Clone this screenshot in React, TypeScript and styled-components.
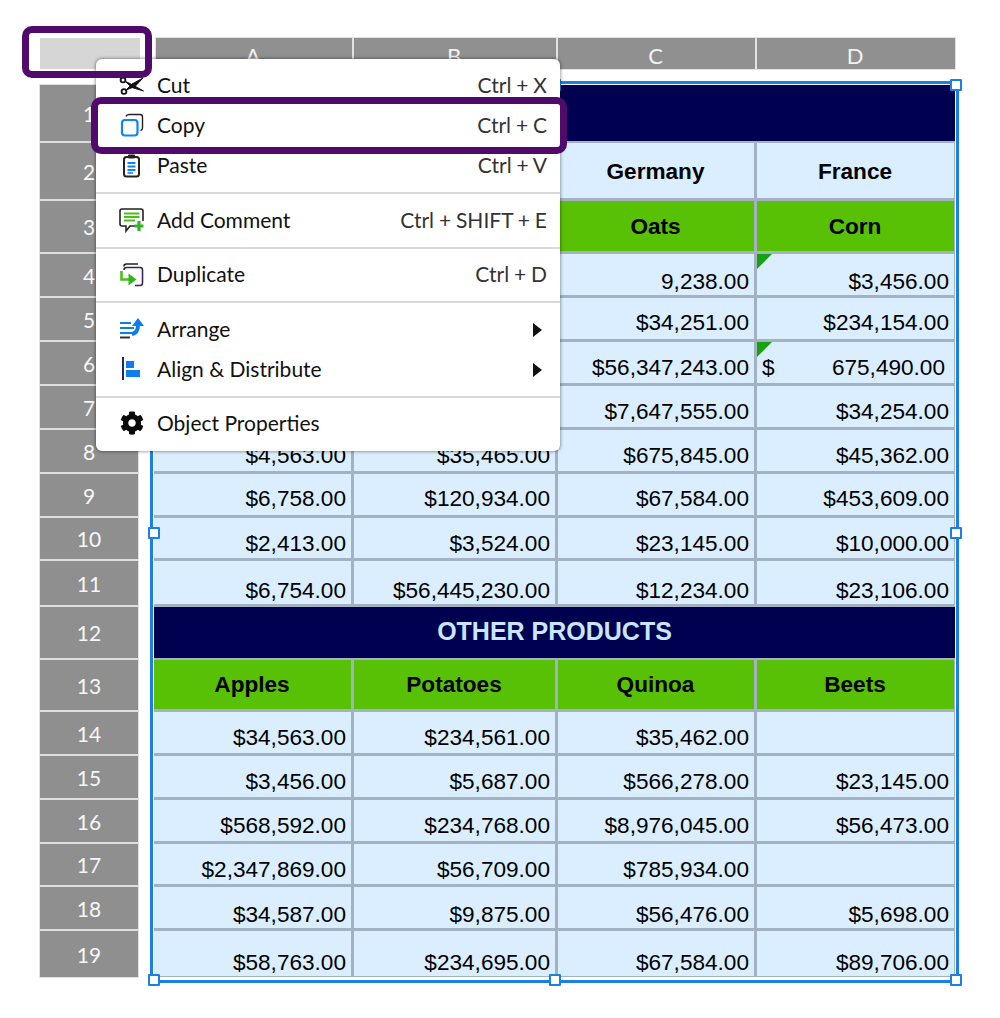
import * as React from "react";
import { FaCog } from "react-icons/fa";
import styled, { createGlobalStyle } from "styled-components";

const GlobalStyle = createGlobalStyle`
    html, body {
        margin: 0;
        padding: 0;
        background: #fff;
    }
`;

const ROW_HEIGHTS = [56, 56, 51, 42, 42, 42, 42, 42, 42, 41, 44, 51, 50, 42, 42, 42, 41, 42, 46];
const rowTemplate = ROW_HEIGHTS.map((h) => `${h}px`).join(" ");

type Row = { cells: string[]; kind?: "value" | "label" | "green"; pad?: number; note?: boolean };

const TOP_ROWS: Row[] = [
    { cells: ["", "", "Germany", "France"], kind: "label" },
    { cells: ["", "", "Oats", "Corn"], kind: "green" },
    { cells: ["", "", "9,238.00", "$3,456.00"], pad: 1, note: true },
    { cells: ["", "", "$34,251.00", "$234,154.00"], pad: 4 },
    { cells: ["", "", "$56,347,243.00", "675,490.00"] },
    { cells: ["", "", "$7,647,555.00", "$34,254.00"] },
    { cells: ["$4,563.00", "$35,465.00", "$675,845.00", "$45,362.00"] },
    { cells: ["$6,758.00", "$120,934.00", "$67,584.00", "$453,609.00"], pad: 4 },
    { cells: ["$2,413.00", "$3,524.00", "$23,145.00", "$10,000.00"], pad: 2 },
    { cells: ["$6,754.00", "$56,445,230.00", "$12,234.00", "$23,106.00"], pad: 1 },
];

const BOTTOM_ROWS: Row[] = [
    { cells: ["Apples", "Potatoes", "Quinoa", "Beets"], kind: "green" },
    { cells: ["$34,563.00", "$234,561.00", "$35,462.00", ""] },
    { cells: ["$3,456.00", "$5,687.00", "$566,278.00", "$23,145.00"] },
    { cells: ["$568,592.00", "$234,768.00", "$8,976,045.00", "$56,473.00"] },
    { cells: ["$2,347,869.00", "$56,709.00", "$785,934.00", ""], pad: 2 },
    { cells: ["$34,587.00", "$9,875.00", "$56,476.00", "$5,698.00"], pad: 1 },
    { cells: ["$58,763.00", "$234,695.00", "$67,584.00", "$89,706.00"], pad: 1 },
];

const Page = styled.div`
    position: relative;
    width: 1000px;
    height: 1018px;
    padding: 38px 0 0 40px;
    box-sizing: border-box;
    overflow: hidden;
    background: #fff;
    font-family: "Liberation Sans", Arial, sans-serif;
`;

const HeaderRow = styled.div`
    display: grid;
    grid-template-columns: 114px 196px 202px 197px 198px;
    column-gap: 2px;
    width: 915px;
    height: 30px;
    margin-bottom: 17px;
`;

const Corner = styled.div`
    width: 100px;
    background: #d6d6d6;
`;

const ColumnHead = styled.div`
    display: flex;
    justify-content: center;
    align-items: center;
    padding: 4px 2px 0 0;
    background: #909090;
    outline: 1px solid #e2e2e2;
    color: #f2f2f2;
    font-family: Lato, sans-serif;
    font-size: 22px;
`;

const Body = styled.div`
    display: flex;
    align-items: flex-start;
`;

const RowHeads = styled.div`
    display: grid;
    grid-template-rows: ${rowTemplate};
    row-gap: 2px;
    width: 98px;
    margin-right: 16px;
    background: #dedede;
    outline: 1px solid #e2e2e2;
`;

const RowHead = styled.div`
    display: flex;
    justify-content: center;
    align-items: center;
    background: #8f8f8f;
    color: #f6f6f6;
    font-family: Lato, sans-serif;
    font-size: 21px;
`;

const Selection = styled.div`
    position: relative;
`;

const DataGrid = styled.div`
    display: grid;
    grid-template-columns: 198px 202px 197px 198px;
    grid-template-rows: ${rowTemplate};
    gap: 2px;
    width: 801px;
    background: #a3b2c2;
`;

const Cell = styled.div<{ $kind?: string; $pad?: number }>`
    position: relative;
    display: flex;
    box-sizing: border-box;
    font-size: 22.6px;
    line-height: 26px;
    color: #000;
    background: ${(p) => (p.$kind === "green" ? "#58c005" : "#daeeff")};
    box-shadow: inset 0 -1px 0 #a3b2c2, inset -1px 0 0 #a3b2c2;
    font-weight: ${(p) => (p.$kind === "value" ? 400 : 700)};
    justify-content: ${(p) => (p.$kind === "value" ? "flex-end" : "center")};
    align-items: ${(p) => (p.$kind === "value" ? "flex-end" : "center")};
    padding: ${(p) =>
        p.$kind === "value"
            ? `0 6px ${p.$pad ?? 3}px 0`
            : p.$kind === "green"
              ? "0 2px 0 0"
              : "2px 2px 0 0"};
`;

const AccountingCell = styled(Cell)`
    justify-content: space-between;
    padding: 0 10px 3px 5px;
`;

const Banner = styled.div`
    grid-column: 1 / -1;
    display: flex;
    justify-content: center;
    align-items: center;
    padding-bottom: 2px;
    background: #000050;
    color: #c8e6ff;
    font-size: 25px;
    font-weight: 700;
`;

const NoteMark = styled.span`
    position: absolute;
    left: 0;
    top: 0;
    width: 0;
    height: 0;
    border-top: 15px solid #14a30a;
    border-right: 15px solid transparent;
`;

const SelectionFrame = styled.div`
    position: absolute;
    inset: -4px -4px -6px -4px;
    border: 3px solid #1a80e6;
    pointer-events: none;
`;

const Handle = styled.span<{ $x: string; $y: string }>`
    position: absolute;
    left: ${(p) => p.$x};
    top: ${(p) => p.$y};
    width: 12px;
    height: 12px;
    box-sizing: border-box;
    margin: -5.5px 0 0 -5.5px;
    background: #fff;
    border: 2px solid #1a80e6;
    border-radius: 1px;
`;

const Menu = styled.div`
    position: absolute;
    left: 96px;
    top: 59px;
    width: 464px;
    box-sizing: border-box;
    padding: 6px 0 8px;
    background: #fff;
    border-radius: 6px;
    box-shadow: 0 0 3px 1px rgba(0, 0, 0, 0.35);
    font-family: Lato, sans-serif;
    font-size: 21px;
    color: #111;
`;

const Item = styled.div`
    display: flex;
    align-items: center;
    height: 40px;
    box-sizing: border-box;
    padding: 0 13px 2px 22px;
`;

const IconSlot = styled.span`
    display: flex;
    justify-content: center;
    align-items: center;
    width: 28px;
    height: 28px;
    margin-right: 11px;
`;

const Label = styled.span`
    flex: 1;
`;

const Shortcut = styled.span`
    color: #333;
    word-spacing: -0.5px;
`;

const SubArrow = styled.span`
    width: 0;
    height: 0;
    margin: 4px 5px 0 0;
    border-left: 9px solid #111;
    border-top: 7px solid transparent;
    border-bottom: 7px solid transparent;
`;

const Separator = styled.div<{ $after: number }>`
    height: 2px;
    margin: 7px 0 ${(p) => p.$after}px;
    background: #d9d9d9;
`;

const Ring = styled.div<{ $left: number; $top: number; $width: number; $height: number }>`
    position: absolute;
    left: ${(p) => p.$left}px;
    top: ${(p) => p.$top}px;
    width: ${(p) => p.$width}px;
    height: ${(p) => p.$height}px;
    box-sizing: border-box;
    border: 7px solid #4f0a6c;
    border-radius: 10px;
`;

const Gear = styled(FaCog)`
    margin-top: 2px;
    color: #0a0a0a;
`;

const Icon: React.FC<{ children: React.ReactNode }> = ({ children }) => (
    <svg width="28" height="28" viewBox="0 0 28 28" fill="none" style={{ overflow: "visible" }}>
        {children}
    </svg>
);

const CutIcon = () => (
    <Icon>
        <circle cx="5" cy="10" r="2.4" stroke="#111" strokeWidth="1.8" />
        <circle cx="6" cy="21.5" r="2.4" stroke="#111" strokeWidth="1.8" />
        <path d="M7 11.2 L14 14.6 L25.5 21 L14 17.5 Z" fill="#111" stroke="#111" strokeWidth="1" />
        <path d="M8 20 L14 14 L25 8 L17 16.5 Z" fill="#111" stroke="#111" strokeWidth="1" />
    </Icon>
);

const CopyIcon = () => (
    <Icon>
        <path d="M8 6.5 Q8.5 4.5 11 4.5 H22 Q24.5 4.5 24.5 7 V18 Q24.5 20 22.5 20.5" stroke="#222" strokeWidth="1.4" />
        <rect x="4" y="10" width="15.5" height="15.5" rx="3" stroke="#0d84ff" strokeWidth="2.2" />
    </Icon>
);

const PasteIcon = () => (
    <Icon>
        <rect x="6" y="7" width="15" height="19.5" rx="2.5" stroke="#2a2018" strokeWidth="2" />
        <rect x="10" y="4.5" width="7" height="4" rx="1" fill="#222" />
        <path d="M9.5 13 H17.5 M9.5 16.5 H17.5 M9.5 20 H17.5" stroke="#0d84ff" strokeWidth="2" />
        <path d="M9.5 23 H15" stroke="#0d84ff" strokeWidth="1.6" />
    </Icon>
);

const CommentIcon = () => (
    <Icon>
        <path d="M20 21 H12 L8 26 V21 H4 Q2 21 2 19 V6 Q2 4 4 4 H23 Q25 4 25 6 V16" stroke="#222" strokeWidth="1.6" />
        <path d="M6 8.5 H21.5 M6 12 H21.5 M6 15.5 H17" stroke="#4cc016" strokeWidth="2.2" />
        <path d="M21 16 V26 M16.5 21 H25.5" stroke="#2fb32a" strokeWidth="3.2" />
    </Icon>
);

const DuplicateIcon = () => (
    <Icon>
        <path d="M6 7.5 Q6 5 8.5 5 H20" stroke="#222" strokeWidth="1.6" />
        <path d="M6 11 Q6 8.5 8.5 8.5 H22 Q24.5 8.5 24.5 11 V24 Q24.5 26.5 22 26.5 H17" stroke="#3d2458" strokeWidth="1.6" />
        <path d="M3.5 12 V20.5 H11" stroke="#4cc016" strokeWidth="2.6" />
        <path d="M10.5 14.5 L18.5 20.5 L10.5 26.5 Z" fill="#33b51a" />
    </Icon>
);

const ArrangeIcon = () => (
    <Icon>
        <path d="M2 9 H13 M2 14 H16 M2 19 H16" stroke="#0d7cf0" strokeWidth="2" />
        <path d="M2 23.5 H12" stroke="#333" strokeWidth="2" />
        <path d="M14 20 Q20 19 20 11" stroke="#0d7cf0" strokeWidth="4" />
        <path d="M14 12 L20 4 L26 12 Z" fill="#0d7cf0" />
    </Icon>
);

const AlignIcon = () => (
    <Icon>
        <path d="M5 3 V26" stroke="#1b2a6b" strokeWidth="2" />
        <rect x="8" y="7" width="8" height="7" fill="#0d7cf0" />
        <rect x="8" y="16" width="14" height="7" fill="#0d7cf0" />
    </Icon>
);

const HANDLES = [
    ["0", "0"],
    ["50%", "0"],
    ["calc(100% - 1px)", "0"],
    ["0", "50%"],
    ["calc(100% - 1px)", "50%"],
    ["0", "calc(100% - 1px)"],
    ["50%", "calc(100% - 1px)"],
    ["calc(100% - 1px)", "calc(100% - 1px)"],
];

const MenuRow: React.FC<{ icon: React.ReactNode; label: string; shortcut?: string; sub?: boolean }> = ({
    icon,
    label,
    shortcut,
    sub,
}) => (
    <Item>
        <IconSlot>{icon}</IconSlot>
        <Label>{label}</Label>
        {shortcut && <Shortcut>{shortcut}</Shortcut>}
        {sub && <SubArrow />}
    </Item>
);

const Rows: React.FC<{ rows: Row[] }> = ({ rows }) => (
    <>
        {rows.flatMap((row, r) =>
            row.cells.map((text, c) => {
                const kind = row.kind ?? "value";
                const key = `${r}-${c}`;
                if (text === "675,490.00") {
                    return (
                        <AccountingCell key={key} $kind={kind}>
                            <NoteMark />
                            <span>$</span>
                            <span>{text}</span>
                        </AccountingCell>
                    );
                }
                return (
                    <Cell key={key} $kind={kind} $pad={row.pad}>
                        {row.note && c === 3 && <NoteMark />}
                        {text}
                    </Cell>
                );
            }),
        )}
    </>
);

export default function App() {
    return (
        <Page>
            <GlobalStyle />
            <HeaderRow>
                <Corner />
                <ColumnHead>A</ColumnHead>
                <ColumnHead>B</ColumnHead>
                <ColumnHead>C</ColumnHead>
                <ColumnHead>D</ColumnHead>
            </HeaderRow>
            <Body>
                <RowHeads>
                    {ROW_HEIGHTS.map((_, i) => (
                        <RowHead key={i}>{i + 1}</RowHead>
                    ))}
                </RowHeads>
                <Selection>
                    <DataGrid>
                        <Banner />
                        <Rows rows={TOP_ROWS} />
                        <Banner>OTHER PRODUCTS</Banner>
                        <Rows rows={BOTTOM_ROWS} />
                    </DataGrid>
                    <SelectionFrame>
                        {HANDLES.map(([x, y]) => (
                            <Handle key={`${x}${y}`} $x={x} $y={y} />
                        ))}
                    </SelectionFrame>
                </Selection>
            </Body>
            <Menu>
                <MenuRow icon={<CutIcon />} label="Cut" shortcut="Ctrl + X" />
                <MenuRow icon={<CopyIcon />} label="Copy" shortcut="Ctrl + C" />
                <MenuRow icon={<PasteIcon />} label="Paste" shortcut="Ctrl + V" />
                <Separator $after={6} />
                <MenuRow icon={<CommentIcon />} label="Add Comment" shortcut="Ctrl + SHIFT + E" />
                <Separator $after={5} />
                <MenuRow icon={<DuplicateIcon />} label="Duplicate" shortcut="Ctrl + D" />
                <Separator $after={6} />
                <MenuRow icon={<ArrangeIcon />} label="Arrange" sub />
                <MenuRow icon={<AlignIcon />} label="Align & Distribute" sub />
                <Separator $after={5} />
                <MenuRow icon={<Gear size={24} />} label="Object Properties" />
            </Menu>
            <Ring $left={22} $top={26} $width={130} $height={52} />
            <Ring $left={91} $top={97} $width={476} $height={57} />
        </Page>
    );
}
